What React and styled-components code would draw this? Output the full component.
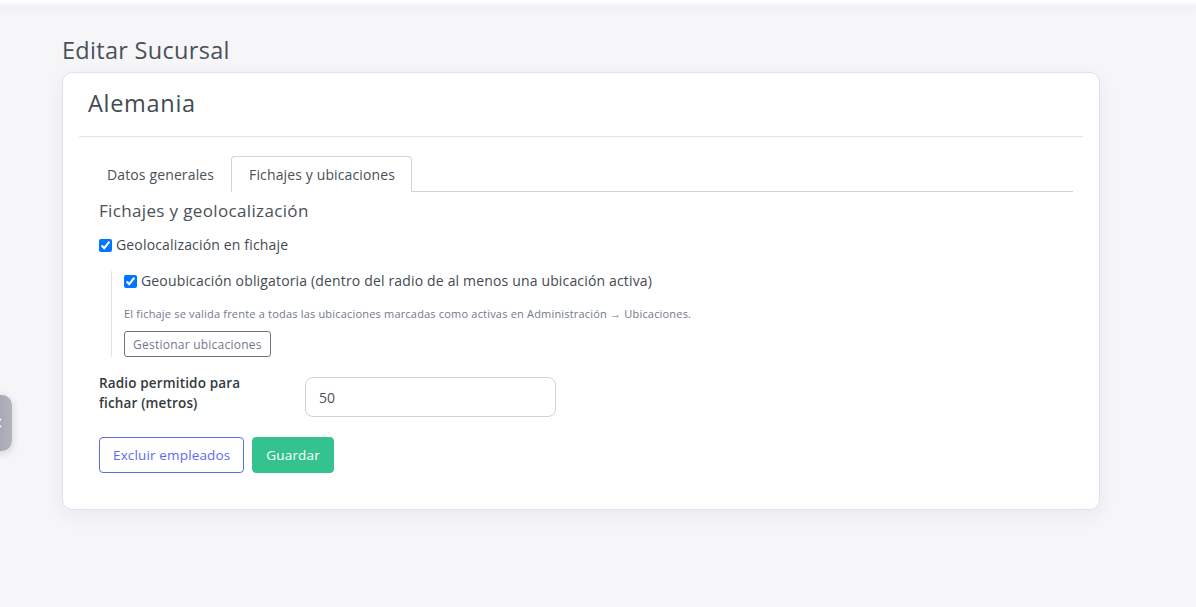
import React from "react";
import styled, { createGlobalStyle } from "styled-components";

const Global = createGlobalStyle`
  html, body { margin: 0; padding: 0; }
  body {
    background: #f6f6f9;
    font-family: "Open Sans", "Noto Sans", sans-serif;
    color: #495057;
  }
  * { box-sizing: border-box; }
`;

const Page = styled.div`
  min-height: 607px;
  padding: 36px 96px 40px 62px;
  background: linear-gradient(#ffffff 0, #fbfbfd 3px, #f1f1f5 6px, #f6f6f9 16px);
`;

const PageTitle = styled.h1`
  margin: 0 0 7px;
  font-size: 23.5px;
  line-height: 29px;
  font-weight: 500;
  letter-spacing: 0.3px;
  color: #495057;
`;

const Card = styled.div`
  width: 1038px;
  background: #fff;
  border: 1px solid #dde2ee;
  border-radius: 10px;
  box-shadow: 0 6px 20px rgba(40, 40, 80, 0.06);
  padding: 0 16px 36px;
`;

const CardHeader = styled.div`
  padding: 16px 9px 18px;
  font-size: 23.5px;
  line-height: 29px;
  font-weight: 500;
  letter-spacing: 0.7px;
  color: #444a52;
  border-bottom: 1px solid #e3e4ea;
`;

const CardBody = styled.div`
  padding: 19px 10px 0;
`;

const TabBar = styled.div`
  display: flex;
  border-bottom: 1px solid #ced3dc;
`;

const Tab = styled.div`
  height: 36px;
  margin-bottom: -1px;
  padding: 0 16px 0 17px;
  display: flex;
  align-items: center;
  font-size: 14px;
  letter-spacing: 0.13px;
  color: #495057;
  border: 1px solid ${(p) => (p.$active ? "#ced3dc" : "transparent")};
  border-bottom-color: ${(p) => (p.$active ? "#fff" : "transparent")};
  border-radius: 4px 4px 0 0;
  background: #fff;
`;

const Content = styled.div`
  padding: 9px 10px 0;
`;

const SectionTitle = styled.h3`
  margin: 0 0 14px;
  font-size: 17px;
  line-height: 20px;
  font-weight: 500;
  letter-spacing: 0.35px;
  color: #495057;
`;

const CheckRow = styled.label`
  display: flex;
  align-items: center;
  font-size: 14px;
  letter-spacing: 0.16px;
  line-height: 20px;
  color: #444a52;
  input {
    margin: 0 4px 0 0;
    width: 13px;
    height: 13px;
  }
`;

const Nested = styled.div`
  margin: 16px 0 0 12px;
  padding: 0 0 0 12px;
  border-left: 1px solid #e3e4ea;
`;

const Help = styled.div`
  margin: 15px 0 9px;
  font-size: 11px;
  letter-spacing: 0.19px;
  line-height: 16px;
  color: #74788d;
`;

const OutlineSmall = styled.button`
  height: 26px;
  padding: 0 8px;
  font-family: inherit;
  font-size: 12px;
  letter-spacing: 0.24px;
  color: #74788d;
  background: #fff;
  border: 1px solid #6c757d;
  border-radius: 3px;
`;

const FieldRow = styled.div`
  display: grid;
  grid-template-columns: 206px 251px;
  align-items: start;
  margin-top: 16px;
`;

const FieldLabel = styled.label`
  font-size: 13.5px;
  letter-spacing: 0.15px;
  line-height: 20px;
  font-weight: 600;
  color: #343a40;
`;

const Input = styled.input`
  margin-top: 4px;
  height: 40px;
  padding: 0 13px;
  font-family: inherit;
  font-size: 14px;
  color: #495057;
  border: 1px solid #ced4da;
  border-radius: 8px;
  outline: none;
`;

const Actions = styled.div`
  display: flex;
  gap: 8px;
  margin-top: 20px;
`;

const Button = styled.button`
  height: 36px;
  padding: 0 13px;
  font-family: inherit;
  font-size: 13.5px;
  letter-spacing: 0.15px;
  border-radius: 4px;
  border: 1px solid ${(p) => (p.$variant === "primary" ? "#34c38f" : "#5b6ee8")};
  background: ${(p) => (p.$variant === "primary" ? "#34c38f" : "#fff")};
  color: ${(p) => (p.$variant === "primary" ? "#fff" : "#5b6ee8")};
`;

const SideHandle = styled.div`
  position: fixed;
  left: -28px;
  top: 395px;
  width: 40px;
  height: 56px;
  border-radius: 10px;
  background: linear-gradient(90deg, #8e909c, #b2b4be);
  box-shadow: 0 2px 8px rgba(0, 0, 0, 0.15);
  display: flex;
  align-items: center;
  justify-content: flex-end;
  padding-right: 8px;
  color: #fff;
  svg { margin-right: 1px; }
`;

export default function App() {
  return (
    <>
      <Global />
      <Page>
        <PageTitle>Editar Sucursal</PageTitle>
        <Card>
          <CardHeader>Alemania</CardHeader>
          <CardBody>
            <TabBar>
              <Tab>Datos generales</Tab>
              <Tab $active>Fichajes y ubicaciones</Tab>
            </TabBar>
            <Content>
              <SectionTitle>Fichajes y geolocalización</SectionTitle>
              <CheckRow>
                <input type="checkbox" defaultChecked />
                Geolocalización en fichaje
              </CheckRow>
              <Nested>
                <CheckRow>
                  <input type="checkbox" defaultChecked />
                  Geoubicación obligatoria (dentro del radio de al menos una ubicación activa)
                </CheckRow>
                <Help>
                  El fichaje se valida frente a todas las ubicaciones marcadas como activas en Administración → Ubicaciones.
                </Help>
                <OutlineSmall>Gestionar ubicaciones</OutlineSmall>
              </Nested>
              <FieldRow>
                <FieldLabel>
                  Radio permitido para
                  <br />
                  fichar (metros)
                </FieldLabel>
                <Input defaultValue="50" />
              </FieldRow>
              <Actions>
                <Button>Excluir empleados</Button>
                <Button $variant="primary">Guardar</Button>
              </Actions>
            </Content>
          </CardBody>
        </Card>
      </Page>
      <SideHandle>
        <svg width="8" height="10" viewBox="0 0 8 10" fill="none" stroke="#fff" strokeWidth="1.6">
          <path d="M6 1 L2 5 L6 9" />
        </svg>
      </SideHandle>
    </>
  );
}
